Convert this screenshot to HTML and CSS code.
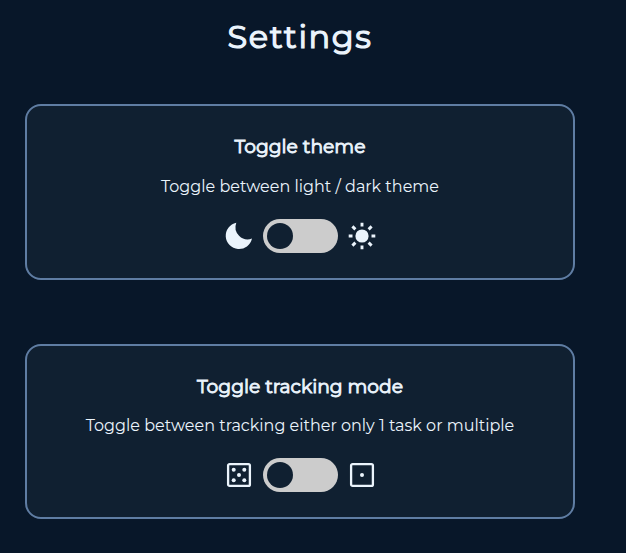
FILE: index.html
```html
<!DOCTYPE html>
<html lang="en">
<head>
<meta charset="utf-8">
<title>Settings</title>
<link rel="stylesheet" href="styles.css">
</head>
<body>
<main class="settings">
  <h1 class="title">Settings</h1>
  <section class="card">
    <h2 class="heading">Toggle theme</h2>
    <p class="description">Toggle between light / dark theme</p>
    <div class="controls">
      <svg class="icon" viewBox="0 0 28 28"><path d="M11.3 .7A13.3 13.3 0 1 0 27 16.6A12.3 12.3 0 0 1 11.3 .7Z"/></svg>
      <button class="switch" role="switch" aria-checked="false"><span class="knob"></span></button>
      <svg class="icon" viewBox="0 0 28 28"><circle cx="14" cy="14" r="6.6"/><path class="rays" d="M14 .7v3.8M14 23.5v3.8M.7 14h3.8M23.5 14h3.8M4.4 4.4l3 3M20.6 20.6l3 3M4.4 23.6l3-3M20.6 7.4l3-3"/></svg>
    </div>
  </section>
  <section class="card card-tracking">
    <h2 class="heading">Toggle tracking mode</h2>
    <p class="description">Toggle between tracking either only 1 task or multiple</p>
    <div class="controls">
      <svg class="icon" viewBox="0 0 28 28"><rect class="die" x="3.1" y="3.1" width="21.8" height="21.8" rx="1.5"/><circle cx="8.7" cy="8.7" r="2"/><circle cx="19.3" cy="8.7" r="2"/><circle cx="14" cy="14" r="2"/><circle cx="8.7" cy="19.3" r="2"/><circle cx="19.3" cy="19.3" r="2"/></svg>
      <button class="switch" role="switch" aria-checked="false"><span class="knob"></span></button>
      <svg class="icon" viewBox="0 0 28 28"><rect class="die" x="3.1" y="3.1" width="21.8" height="21.8" rx="1.5"/><circle cx="14" cy="14" r="2"/></svg>
    </div>
  </section>
</main>
</body>
</html>
```
FILE: styles.css
```css
* { box-sizing: border-box; }
body {
  margin: 0;
  background: #081729;
  color: #ebf4fc;
  font-family: Montserrat, Inter, sans-serif;
}
.settings {
  width: 550px;
  margin-left: 25px;
  padding-top: 17px;
  text-align: center;
}
.title {
  margin: 0 0 47px;
  font-size: 32px;
  line-height: 40px;
  font-weight: 400;
  letter-spacing: 1.6px;
  -webkit-text-stroke: 1.2px #ebf4fc;
}
.card {
  height: 176px;
  padding-top: 29px;
  border: 2px solid #5f7da3;
  border-radius: 16px;
  background: #102031;
}
.card-tracking {
  height: 175px;
  margin-top: 64px;
}
.heading {
  margin: 0;
  font-size: 18.72px;
  line-height: 24px;
  font-weight: 400;
  white-space: nowrap;
  -webkit-text-stroke: 0.9px #ebf4fc;
}
.description {
  margin: 18px 0 22px;
  font-size: 16px;
  line-height: 20px;
  white-space: nowrap;
}
.card-tracking .description { margin: 17px 0 22px; }
.controls {
  display: flex;
  align-items: center;
  justify-content: center;
  gap: 10px;
}
.icon {
  width: 28px;
  height: 28px;
  fill: #ebf4fc;
}
.rays { fill: none; stroke: #ebf4fc; stroke-width: 2.9; }
.die { fill: none; stroke: #ebf4fc; stroke-width: 2.3; }
.switch {
  display: flex;
  width: 75px;
  height: 34px;
  padding: 4px;
  border: 0;
  border-radius: 17px;
  background: #ccc;
}
.knob {
  width: 26px;
  height: 26px;
  border-radius: 50%;
  background: #102031;
}
```
